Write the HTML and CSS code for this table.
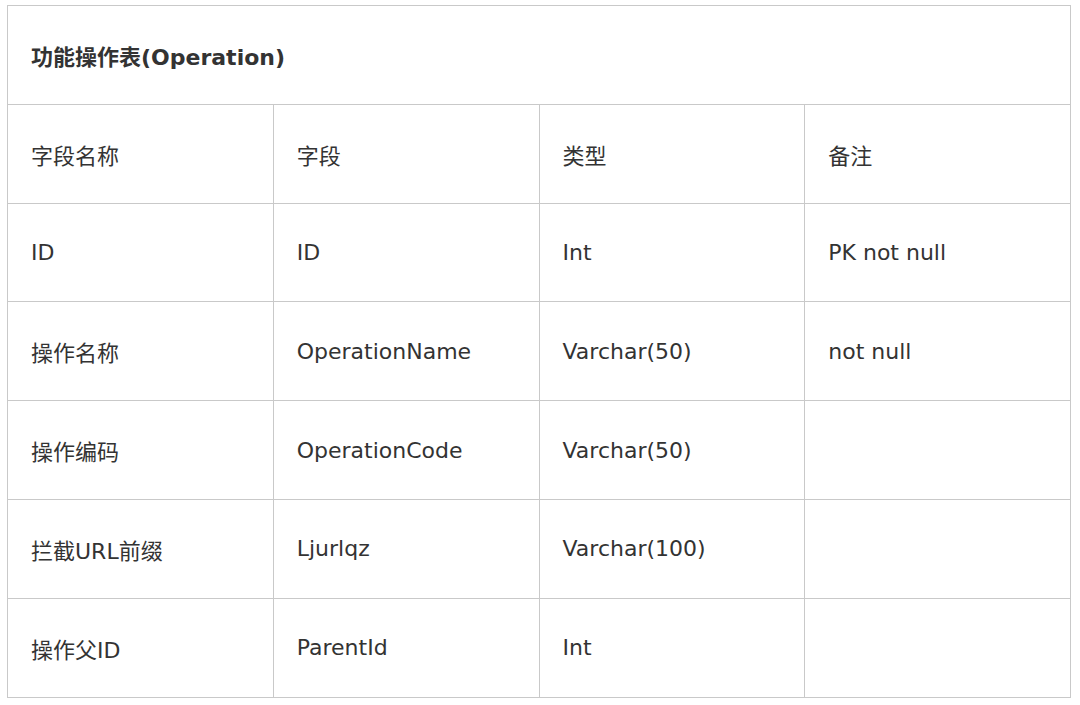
FILE: index.html
```html
<!DOCTYPE html>
<html lang="zh">
<head>
<meta charset="utf-8">
<link rel="stylesheet" href="styles.css">
</head>
<body>
<table class="tbl">
  <colgroup><col class="c"><col class="c"><col class="c"><col class="c"></colgroup>
  <tr><th colspan="4" class="title">功能操作表(Operation)</th></tr>
  <tr><td>字段名称</td><td>字段</td><td>类型</td><td>备注</td></tr>
  <tr><td>ID</td><td>ID</td><td>Int</td><td>PK not null</td></tr>
  <tr><td>操作名称</td><td>OperationName</td><td>Varchar(50)</td><td>not null</td></tr>
  <tr><td>操作编码</td><td>OperationCode</td><td>Varchar(50)</td><td></td></tr>
  <tr><td>拦截URL前缀</td><td>Ljurlqz</td><td>Varchar(100)</td><td></td></tr>
  <tr><td>操作父ID</td><td>ParentId</td><td>Int</td><td></td></tr>
</table>
</body>
</html>
```
FILE: styles.css
```css
html, body {
  margin: 0;
  padding: 0;
  background: #ffffff;
}
body {
  padding: 5px 0 0 7px;
  font-family: "DejaVu Sans", "Noto Sans CJK SC", sans-serif;
  color: #333333;
}
.tbl {
  border-collapse: collapse;
  width: 1064px;
  table-layout: fixed;
}
.c { width: 25%; }
.tbl td, .tbl th {
  border: 1px solid #c9c9c9;
  height: 98.8px;
  padding: 0 0 0 23px;
  font-size: 22px;
  text-align: left;
  vertical-align: middle;
  font-weight: normal;
  box-sizing: border-box;
}
.tbl th.title {
  font-weight: bold;
}
```
